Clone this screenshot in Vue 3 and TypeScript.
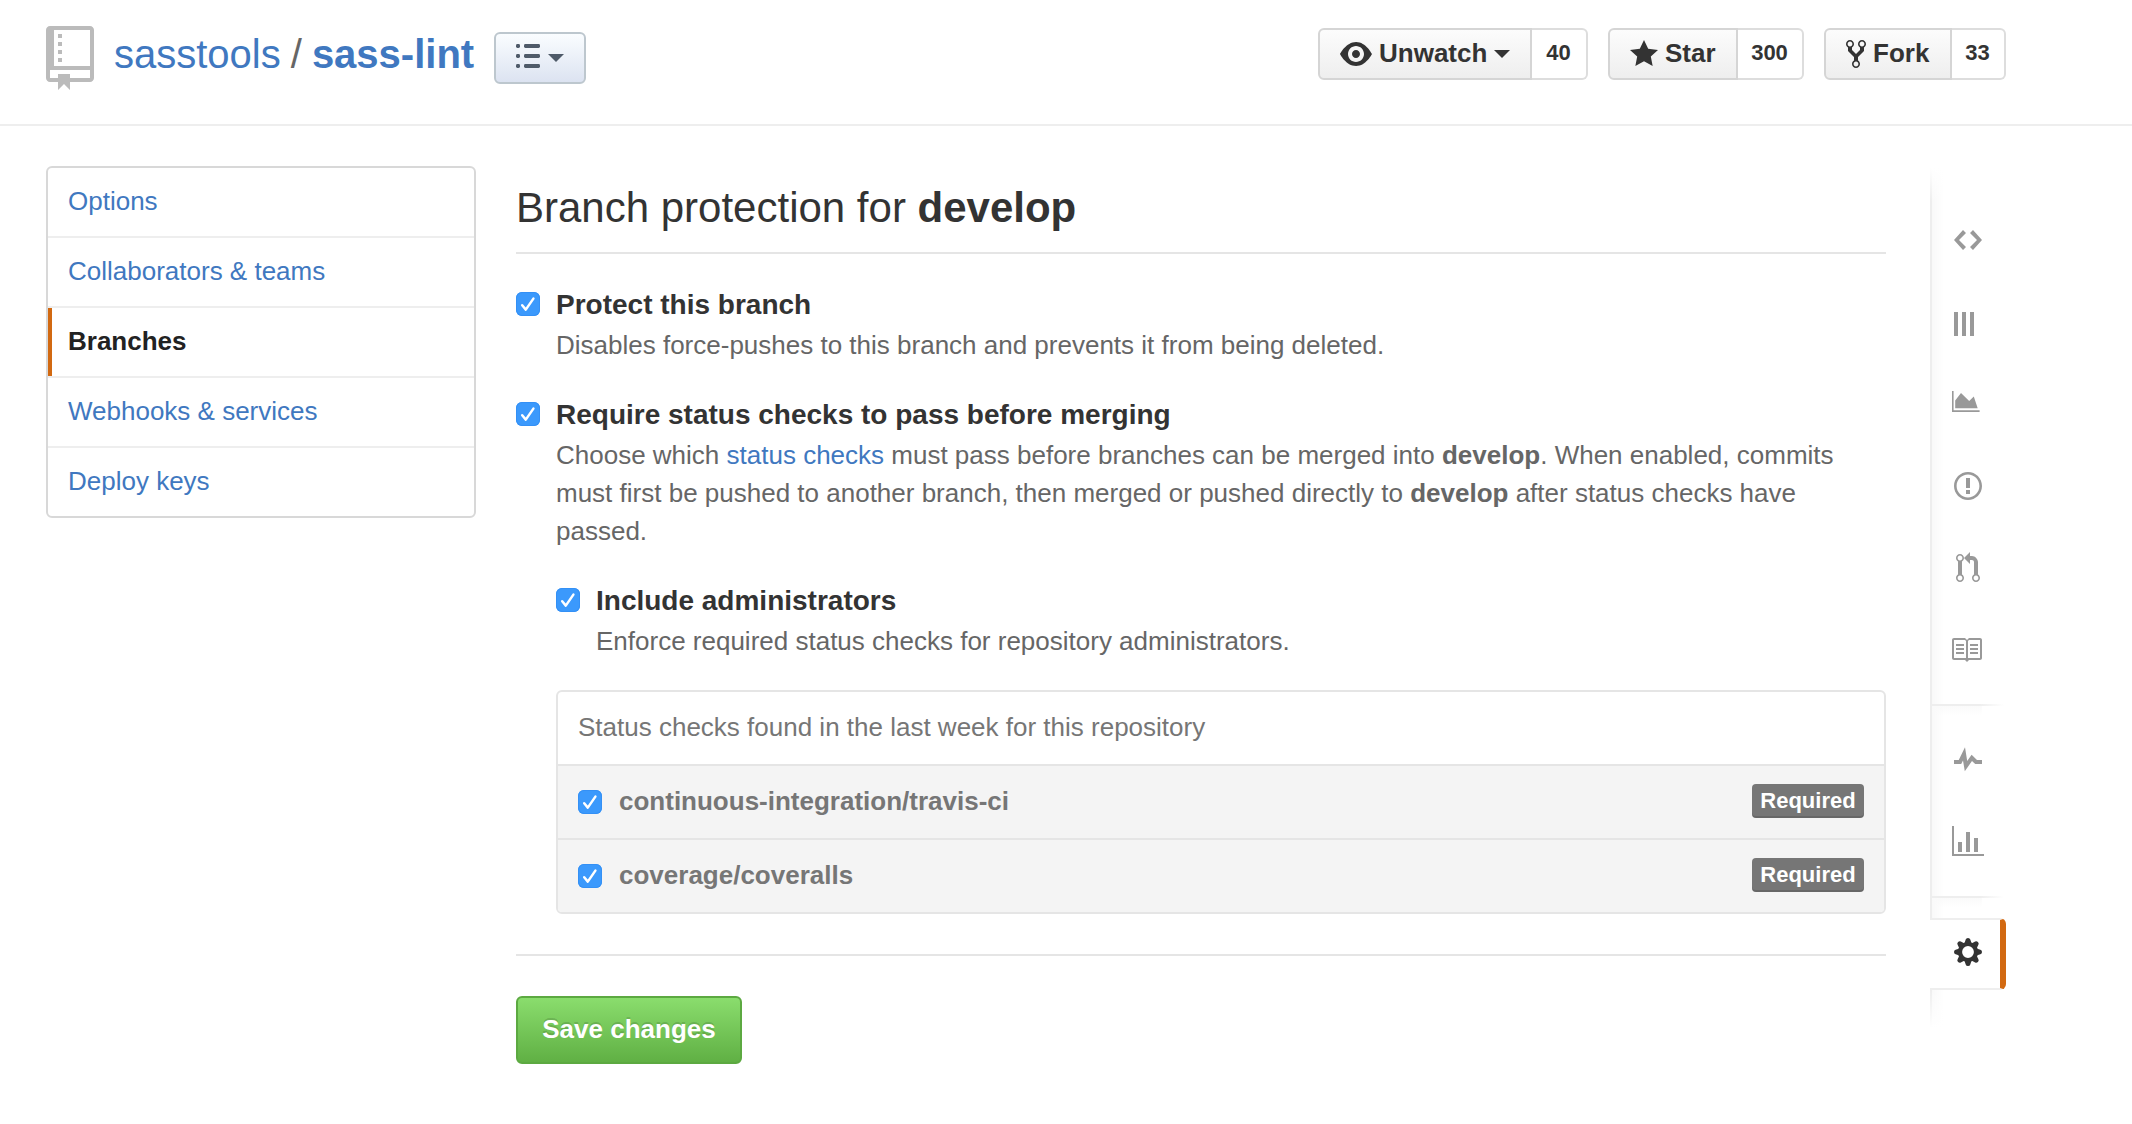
<script setup lang="ts">
import { ref } from 'vue'

interface SocialButton {
  label: string
  count: string
  icon: string
  iconWidth: number
  caret: boolean
}

const socials: SocialButton[] = [
  {
    label: 'Unwatch',
    count: '40',
    iconWidth: 16,
    caret: true,
    icon: 'M8.06 2C3 2 0 8 0 8s3 6 8.06 6c4.94 0 7.94-6 7.94-6S13 2 8.06 2z m-0.06 10c-2.2 0-4-1.78-4-4 0-2.2 1.8-4 4-4 2.22 0 4 1.8 4 4 0 2.22-1.78 4-4 4z m2-4c0 1.11-0.89 2-2 2s-2-0.89-2-2 0.89-2 2-2 2 0.89 2 2z',
  },
  {
    label: 'Star',
    count: '300',
    iconWidth: 14,
    caret: false,
    icon: 'M14 6l-4.9-0.64L7 1 4.9 5.36 0 6l3.6 3.26L2.67 14l4.33-2.33 4.33 2.33L10.4 9.26 14 6z',
  },
  {
    label: 'Fork',
    count: '33',
    iconWidth: 10,
    caret: false,
    icon: 'M8 1c-1.11 0-2 0.89-2 2 0 0.73 0.41 1.38 1 1.72v1.28L5 8 3 6v-1.28c0.59-0.34 1-0.98 1-1.72 0-1.11-0.89-2-2-2S0 1.89 0 3c0 0.73 0.41 1.38 1 1.72v1.78l3 3v1.78c-0.59 0.34-1 0.98-1 1.72 0 1.11 0.89 2 2 2s2-0.89 2-2c0-0.73-0.41-1.38-1-1.72V9.5l3-3V4.72c0.59-0.34 1-0.98 1-1.72 0-1.11-0.89-2-2-2zM2 4.2c-0.66 0-1.2-0.55-1.2-1.2s0.55-1.2 1.2-1.2 1.2 0.55 1.2 1.2-0.55 1.2-1.2 1.2z m3 10c-0.66 0-1.2-0.55-1.2-1.2s0.55-1.2 1.2-1.2 1.2 0.55 1.2 1.2-0.55 1.2-1.2 1.2z m3-10c-0.66 0-1.2-0.55-1.2-1.2s0.55-1.2 1.2-1.2 1.2 0.55 1.2 1.2-0.55 1.2-1.2 1.2z',
  },
]

const menu = ['Options', 'Collaborators & teams', 'Branches', 'Webhooks & services', 'Deploy keys']
const current = ref('Branches')

const checks = ['continuous-integration/travis-ci', 'coverage/coveralls']
const gearTeeth = [0, 45, 90, 135, 180, 225, 270, 315]
</script>

<template>
  <div class="page">
    <header class="repohead">
      <div class="title">
        <svg class="repo-icon" viewBox="0 0 12 16" width="48" height="64">
          <path
            fill="#bbb"
            d="M4 9h-1v-1h1v1z m0-3h-1v1h1v-1z m0-2h-1v1h1v-1z m0-2h-1v1h1v-1z m8-1v12c0 0.55-0.45 1-1 1H6v2l-1.5-1.5-1.5 1.5V14H1c-0.55 0-1-0.45-1-1V1C0 0.45 0.45 0 1 0h10c0.55 0 1 0.45 1 1z m-1 10H1v2h2v-1h3v1h5V11z m0-10H2v9h9V1z"
          />
        </svg>
        <h1>
          <a class="owner">sasstools</a><span class="slash">/</span><a class="name">sass-lint</a>
        </h1>
        <button class="list-btn">
          <svg width="24" height="24" viewBox="0 0 24 24" fill="#4e5a69">
            <template v-for="y in [0, 10, 20]" :key="y">
              <rect x="0" :y="y" width="4" height="4" rx="1.4" />
              <rect x="8" :y="y" width="16" height="4" rx="1.4" />
            </template>
          </svg>
          <span class="caret"></span>
        </button>
      </div>
      <ul class="socials">
        <li v-for="s in socials" :key="s.label" :class="['social', s.label.toLowerCase()]">
          <a class="social-btn">
            <svg :viewBox="`0 0 ${s.iconWidth} 16`" :width="s.iconWidth * 2" height="32" fill="#333">
              <path :d="s.icon" />
            </svg>
            <span class="social-label">{{ s.label }}</span>
            <span v-if="s.caret" class="caret"></span>
          </a>
          <a class="count"><span>{{ s.count }}</span></a>
        </li>
      </ul>
    </header>

    <div class="body">
      <nav class="menu">
        <a
          v-for="item in menu"
          :key="item"
          :class="['menu-item', { selected: item === current }]"
          @click="current = item"
          >{{ item }}</a
        >
      </nav>

      <main class="content">
        <h2>Branch protection for <strong>develop</strong></h2>

        <section class="option first">
          <span class="check"><svg viewBox="0 0 24 24"><path d="M6.2 13.2l3.6 4.4L17.4 6.6" /></svg></span>
          <div class="option-text">
            <h3>Protect this branch</h3>
            <p>Disables force-pushes to this branch and prevents it from being deleted.</p>
          </div>
        </section>

        <section class="option second">
          <span class="check"><svg viewBox="0 0 24 24"><path d="M6.2 13.2l3.6 4.4L17.4 6.6" /></svg></span>
          <div class="option-text">
            <h3>Require status checks to pass before merging</h3>
            <p>
              Choose which <a>status checks</a> must pass before branches can be merged into
              <strong>develop</strong>. When enabled, commits<br />
              must first be pushed to another branch, then merged or pushed directly to
              <strong>develop</strong> after status checks have<br />
              passed.
            </p>

            <section class="option nested">
              <span class="check"><svg viewBox="0 0 24 24"><path d="M6.2 13.2l3.6 4.4L17.4 6.6" /></svg></span>
              <div class="option-text">
                <h3>Include administrators</h3>
                <p>Enforce required status checks for repository administrators.</p>
              </div>
            </section>

            <div class="checks">
              <div class="checks-head">Status checks found in the last week for this repository</div>
              <div v-for="c in checks" :key="c" class="checks-row">
                <span class="check"><svg viewBox="0 0 24 24"><path d="M6.2 13.2l3.6 4.4L17.4 6.6" /></svg></span>
                <strong>{{ c }}</strong>
                <span class="badge">Required</span>
              </div>
            </div>
          </div>
        </section>

        <hr />
        <button class="save">Save changes</button>
      </main>

      <aside class="sidenav">
        <div class="group top">
          <a class="i-code">
            <svg width="28" height="32" viewBox="0 0 14 16">
              <path d="M9.5 3l-1.5 1.5 3.5 3.5L8 11.5l1.5 1.5 4.5-5L9.5 3zM4.5 3L0 8l4.5 5 1.5-1.5L2.5 8l3.5-3.5L4.5 3z" />
            </svg>
          </a>
          <a class="i-bars">
            <svg width="20" height="24" viewBox="0 0 20 24">
              <path d="M0 0h4v24H0zM8 0h4v24H8zM16 0h4v24h-4z" />
            </svg>
          </a>
          <a class="i-area">
            <svg width="28" height="21" viewBox="0 0 28 21">
              <path d="M0 0h1.6v19.2H27.6V21H0zM3.2 17.3V9.4L9 2l8.2 7.9 4.6-4.4 3.9 11.8z" />
            </svg>
          </a>
          <a class="i-issue">
            <svg width="28" height="32" viewBox="0 0 14 16">
              <path d="M7 2.3c3.14 0 5.7 2.56 5.7 5.7S10.14 13.7 7 13.7 1.3 11.14 1.3 8s2.56-5.7 5.7-5.7m0-1.3C3.14 1 0 4.14 0 8s3.14 7 7 7 7-3.14 7-7S10.86 1 7 1z m1 3H6v5h2V4z m0 6H6v2h2V10z" />
            </svg>
          </a>
          <a class="i-pr">
            <svg width="24" height="32" viewBox="0 0 12 16">
              <path d="M11 11.28c0-1.73 0-6.28 0-6.28-0.03-0.78-0.34-1.47-0.94-2.06s-1.28-0.91-2.06-0.94c0 0-1.02 0-1 0V0L4 3l3 3V4h1c0.27 0.02 0.48 0.11 0.69 0.31s0.3 0.42 0.31 0.69v6.28c-0.59 0.34-1 0.98-1 1.72 0 1.11 0.89 2 2 2s2-0.89 2-2c0-0.73-0.41-1.38-1-1.72z m-1 2.92c-0.66 0-1.2-0.55-1.2-1.2s0.55-1.2 1.2-1.2 1.2 0.55 1.2 1.2-0.55 1.2-1.2 1.2zM4 3c0-1.11-0.89-2-2-2S0 1.89 0 3c0 0.73 0.41 1.38 1 1.72 0 1.55 0 5.56 0 6.56-0.59 0.34-1 0.98-1 1.72 0 1.11 0.89 2 2 2s2-0.89 2-2c0-0.73-0.41-1.38-1-1.72V4.72c0.59-0.34 1-0.98 1-1.72z m-0.8 10c0 0.66-0.55 1.2-1.2 1.2s-1.2-0.55-1.2-1.2 0.55-1.2 1.2-1.2 1.2 0.55 1.2 1.2zM2 4.2c-0.66 0-1.2-0.55-1.2-1.2s0.55-1.2 1.2-1.2 1.2 0.55 1.2 1.2-0.55 1.2-1.2 1.2z" />
            </svg>
          </a>
          <a class="i-book">
            <svg width="32" height="32" viewBox="0 0 16 16">
              <path d="M2 5h4v1H2v-1z m0 3h4v-1H2v1z m0 2h4v-1H2v1z m11-5H9v1h4v-1z m0 2H9v1h4v-1z m0 2H9v1h4v-1z m2-6v9c0 0.55-0.45 1-1 1H8.5l-1 1-1-1H1c-0.55 0-1-0.45-1-1V3c0-0.55 0.45-1 1-1h5.5l1 1 1-1h5.5c0.55 0 1 0.45 1 1z m-8 0.5l-0.5-0.5H1v9h6V3.5z m7-0.5H8.5l-0.5 0.5v8.5h6V3z" />
            </svg>
          </a>
        </div>
        <div class="divider"></div>
        <div class="group mid">
          <a class="i-pulse">
            <svg width="28" height="32" viewBox="0 0 14 16">
              <path d="M11.5 8L8.8 5.4 6.6 8.5 5.5 1.6 2.38 8H0v2h3.6L4.5 8.2l0.9 5.4L9 8.5l1.6 1.5H14V8H11.5z" />
            </svg>
          </a>
          <a class="i-graph">
            <svg width="32" height="32" viewBox="0 0 16 16">
              <path d="M16 14v1H0V0h1v14h15z m-11-1H3V8h2v5z m4 0H7V3h2v10z m4 0H11V6h2v7z" />
            </svg>
          </a>
        </div>
        <div class="divider"></div>
        <div class="group low"></div>
        <div class="active">
          <svg width="28" height="28" viewBox="-14 -14 28 28">
            <circle r="8" fill="none" stroke="#333" stroke-width="4.2" />
            <path
              v-for="a in gearTeeth"
              :key="a"
              :transform="`rotate(${a})`"
              fill="#333"
              d="M-3.6 -8.5L-2.3 -12.4Q-1.9 -14 0 -14Q1.9 -14 2.3 -12.4L3.6 -8.5z"
            />
          </svg>
        </div>
        <div class="tail"></div>
      </aside>
    </div>
  </div>
</template>

<style>
body {
  background: #fff;
}
</style>

<style scoped>
.page {
  height: 1124px;
  overflow: hidden;
  box-sizing: border-box;
  font-family: 'Liberation Sans', Arial, Helvetica, sans-serif;
  font-size: 26px;
  color: #333;
  background: #fff;
}
.page * {
  box-sizing: border-box;
}
h1,
h2,
h3,
p,
ul {
  margin: 0;
  padding: 0;
}
svg {
  display: block;
  flex: none;
}
button {
  font-family: inherit;
  margin: 0;
}

.repohead {
  display: flex;
  justify-content: space-between;
  align-items: flex-start;
  height: 126px;
  padding: 0 126px 0 46px;
  border-bottom: 2px solid #eee;
}
.title {
  display: flex;
  align-items: flex-start;
  height: 124px;
}
.repo-icon {
  margin-top: 26px;
}
h1 {
  display: flex;
  width: 380px;
  height: 48px;
  margin: 30px 0 0 20px;
  font-size: 40px;
  font-weight: 400;
  line-height: 48px;
  white-space: nowrap;
}
.owner,
.name,
p a {
  color: #4078c0;
}
.slash {
  margin: 0 10px;
  color: #666;
}
.name {
  font-weight: 700;
}
.list-btn {
  display: flex;
  align-items: center;
  gap: 8px;
  width: 92px;
  height: 52px;
  margin-top: 32px;
  padding: 0 0 4px 20px;
  border: 2px solid #bdc7ce;
  border-radius: 6px;
  background: linear-gradient(#fafdff, #dce3f1);
}
.list-btn .caret {
  margin-top: 4px;
  border-top-color: #4e5a69;
}
.caret {
  width: 0;
  height: 0;
  border: 8px solid transparent;
  border-top-color: #333;
  border-bottom-width: 0;
}

.socials {
  display: flex;
  gap: 20px;
  margin-top: 28px;
  list-style: none;
}
.social {
  display: flex;
  height: 52px;
  font-weight: 700;
}
.social-btn {
  display: flex;
  align-items: center;
  border: 2px solid #d5d5d5;
  border-radius: 6px 0 0 6px;
  background: linear-gradient(#fcfcfc, #eee);
  padding-left: 20px;
}
.social-label {
  line-height: 50px;
  margin: 0 0 2px 7px;
}
.unwatch .social-btn {
  width: 214px;
}
.unwatch .caret {
  margin-left: 7px;
}
.star .social-btn {
  width: 130px;
}
.fork .social-btn {
  width: 128px;
}
.count {
  display: flex;
  justify-content: center;
  padding-right: 1px;
  border: 2px solid #ddd;
  border-left: 0;
  border-radius: 0 6px 6px 0;
  font-size: 22px;
  line-height: 46px;
}
.unwatch .count {
  width: 56px;
}
.fork .count {
  width: 54px;
}
.star .count {
  width: 66px;
}

.body {
  display: flex;
  align-items: flex-start;
  padding-left: 46px;
}
.menu {
  width: 430px;
  margin-top: 40px;
  border: 2px solid #d8d8d8;
  border-radius: 6px;
  overflow: hidden;
}
.menu-item {
  display: block;
  height: 70px;
  padding-left: 20px;
  border-bottom: 2px solid #eee;
  line-height: 66px;
  color: #4078c0;
}
.menu-item:last-child {
  height: 68px;
  border-bottom: 0;
}
.menu-item.selected {
  height: 68px;
  padding-left: 16px;
  border-bottom: 0;
  border-left: 4px solid #d26911;
  font-weight: 700;
  color: #222;
}
.menu-item.selected + .menu-item {
  height: 72px;
  border-top: 2px solid #eee;
}

.content {
  width: 1370px;
  margin-left: 40px;
}
h2 {
  height: 128px;
  padding-top: 57px;
  border-bottom: 2px solid #e5e5e5;
  font-size: 42px;
  font-weight: 400;
  line-height: 50px;
  white-space: nowrap;
}
.option {
  display: flex;
  gap: 16px;
  margin-top: 32px;
}
.option-text {
  flex: 1;
}
.check {
  flex: none;
  width: 24px;
  height: 24px;
  border-radius: 6px;
  background: #3b99fc;
  box-shadow: inset 0 0 0 1px #3490f5;
}
.option > .check {
  margin-top: 6px;
}
.check path {
  fill: none;
  stroke: #fff;
  stroke-width: 2.5;
  stroke-linecap: round;
  stroke-linejoin: round;
}
h3 {
  height: 40px;
  font-size: 28px;
  font-weight: 700;
  line-height: 37px;
}
p {
  line-height: 38px;
  color: #666;
  white-space: nowrap;
}
.checks {
  height: 224px;
  margin-top: 30px;
  border: 2px solid #e5e5e5;
  border-radius: 6px;
  overflow: hidden;
  color: #767676;
}
.checks-head {
  height: 72px;
  padding-left: 20px;
  line-height: 70px;
}
.checks-row {
  display: flex;
  align-items: center;
  height: 74px;
  padding: 0 20px;
  border-top: 2px solid #e5e5e5;
  background: #f4f4f4;
  line-height: 70px;
}
.checks-row strong {
  height: 72px;
  margin-left: 17px;
}
.badge {
  width: 112px;
  height: 34px;
  margin: 0 0 2px auto;
  border-radius: 4px;
  background: #767676;
  box-shadow: inset 0 -2px 0 rgba(0, 0, 0, 0.12);
  color: #fff;
  font-size: 22px;
  font-weight: 700;
  line-height: 33px;
  text-align: center;
}
hr {
  height: 2px;
  margin: 40px 0;
  border: 0;
  background: #e5e5e5;
}
.save {
  display: block;
  width: 226px;
  height: 68px;
  padding: 0 0 2px;
  border: 2px solid #5ca941;
  border-radius: 6px;
  background: linear-gradient(#8add6d, #60b044);
  color: #fff;
  font-size: 26px;
  font-weight: 700;
  line-height: 62px;
  text-shadow: 0 -2px 0 rgba(0, 0, 0, 0.15);
}

.sidenav {
  width: 76px;
  margin: 42px 0 0 44px;
}
.sidenav a {
  display: block;
}
.sidenav a path {
  fill: #999;
}
.group {
  position: relative;
  border-left: 2px solid #eee;
  background: linear-gradient(90deg, #f9f9f9, #fff 12px);
}
.group.top {
  height: 536px;
  border-image: linear-gradient(#fff, #eee 34px) 1;
  border-style: solid;
  border-width: 0 0 0 2px;
  padding-top: 56px;
}
.group.top::before {
  content: '';
  position: absolute;
  inset: 0 0 auto 0;
  height: 34px;
  background: linear-gradient(#fff, rgba(255, 255, 255, 0));
}
.top a,
.mid a {
  padding-left: 20px;
}
.top .i-code,
.top .i-bars,
.top .i-issue,
.mid .i-pulse {
  padding-left: 22px;
}
.i-bars {
  margin-top: 56px;
}
.i-area {
  margin-top: 55px;
}
.i-issue {
  margin-top: 58px;
}
.top .i-pr {
  margin-top: 50px;
  padding-left: 24px;
}
.i-book {
  margin-top: 50px;
}
.divider {
  height: 2px;
  background: linear-gradient(90deg, #eee, #eee 50px, #fff 74px);
}
.group.mid {
  height: 190px;
  padding-top: 38px;
}
.i-graph {
  margin-top: 50px;
}
.group.low {
  height: 20px;
}
.group.mid,
.group.low {
  background:
    linear-gradient(#fafafa, rgba(255, 255, 255, 0) 10px) 0 0 / 50px 10px no-repeat,
    linear-gradient(90deg, #f9f9f9, #fff 12px);
}
.active {
  display: flex;
  align-items: center;
  height: 72px;
  padding-left: 24px;
  border: 2px solid #eee;
  border-left: 0;
  border-right: 6px solid #d26911;
  border-radius: 0 6px 6px 0;
  padding-bottom: 4px;
}
.tail {
  height: 38px;
  background:
    linear-gradient(rgba(255, 255, 255, 0), #fff),
    linear-gradient(90deg, #eee 2px, #f9f9f9 2px, #fff 14px);
}
</style>
